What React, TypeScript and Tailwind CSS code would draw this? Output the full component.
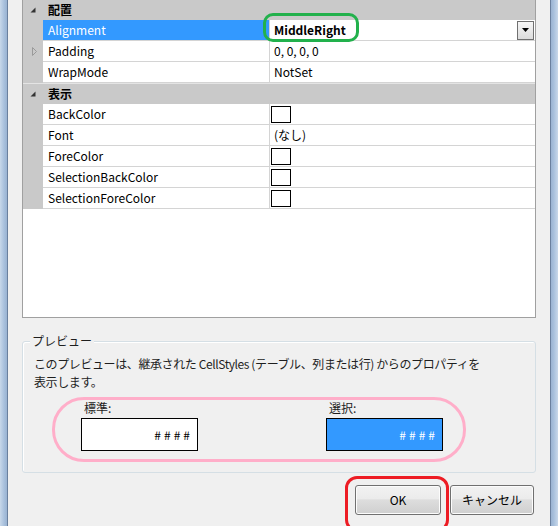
import React from 'react';

type Row =
  | { kind: 'cat'; label: string; first?: boolean }
  | { kind: 'prop'; label: string; value?: string; swatch?: boolean; selected?: boolean; bold?: boolean; expandable?: boolean; dropdown?: boolean };

const rows: Row[] = [
  { kind: 'cat', label: '配置', first: true },
  { kind: 'prop', label: 'Alignment', value: 'MiddleRight', selected: true, bold: true, dropdown: true },
  { kind: 'prop', label: 'Padding', value: '0, 0, 0, 0', expandable: true },
  { kind: 'prop', label: 'WrapMode', value: 'NotSet' },
  { kind: 'cat', label: '表示' },
  { kind: 'prop', label: 'BackColor', swatch: true },
  { kind: 'prop', label: 'Font', value: '(なし)' },
  { kind: 'prop', label: 'ForeColor', swatch: true },
  { kind: 'prop', label: 'SelectionBackColor', swatch: true },
  { kind: 'prop', label: 'SelectionForeColor', swatch: true },
];

function CollapseGlyph() {
  return (
    <svg width="6" height="6" viewBox="0 0 6 6" className="ml-[7px]">
      <polygon points="5.5,0.5 5.5,5.5 0.5,5.5" fill="#333" />
    </svg>
  );
}

function ExpandGlyph() {
  return (
    <svg width="6" height="9" viewBox="0 0 6 9" className="ml-[9px]">
      <polygon points="0.5,0.5 4.5,4.5 0.5,8.5" fill="none" stroke="#9a9a9a" strokeWidth="1" />
    </svg>
  );
}

function GridRow({ row }: { row: Row }) {
  if (row.kind === 'cat') {
    return (
      <div className={`flex items-center bg-[#c9c9c9] ${row.first ? 'h-[20px]' : 'h-[21px] border-t border-[#e4e4e4]'}`}>
        <div className="w-[20px] flex items-center">
          <CollapseGlyph />
        </div>
        <span className="pl-[5px] font-bold text-black">{row.label}</span>
      </div>
    );
  }
  return (
    <div className="flex h-[21px]">
      <div className="w-[20px] bg-[#c9c9c9] flex items-center">{row.expandable && <ExpandGlyph />}</div>
      <div
        className={`w-[227px] border-b border-r border-[#d4d4d4] flex items-center pl-[5px] ${
          row.selected ? 'bg-[#3399ff] text-white' : 'bg-white text-black'
        }`}
      >
        {row.label}
      </div>
      <div className="flex-1 border-b border-[#d4d4d4] bg-white flex items-center">
        {row.swatch && <div className="ml-[1px] w-[20px] h-[17px] border border-black bg-white" />}
        {row.value && <span className={`pl-[4px] text-black ${row.bold ? 'font-bold' : ''}`}>{row.value}</span>}
        {row.dropdown && (
          <div className="ml-auto mr-[1px] w-[17px] h-[19px] border border-[#707070] bg-[linear-gradient(#f6f6f6,#dcdcdc)] flex items-center justify-center">
            <svg width="7" height="4" viewBox="0 0 7 4">
              <polygon points="0,0 7,0 3.5,4" fill="#000" />
            </svg>
          </div>
        )}
      </div>
    </div>
  );
}

function WinButton({ label, w }: { label: string; w: string }) {
  return (
    <div
      className={`${w} h-[30px] rounded-[3px] border border-[#707070] bg-[linear-gradient(#f2f2f2_0%,#ebebeb_45%,#dddddd_50%,#cfcfcf_100%)] flex items-center justify-center text-black shadow-[inset_0_0_0_1px_#fcfcfc]`}
    >
      {label}
    </div>
  );
}

export default function App() {
  return (
    <div
      className="w-[558px] h-[526px] flex overflow-hidden text-[12px] leading-none"
      style={{ fontFamily: '"Noto Sans CJK JP", "Noto Sans", sans-serif' }}
    >
      <div className="w-[8px] bg-[linear-gradient(to_right,#c8d8ea,#a8c0dc_60%,#9ab3d2)] border-r border-[#6a809e]" />

      <div className="flex-1 bg-[#f0f0f0] relative flex flex-col px-[14px]">
        {/* property grid */}
        <div className="h-[318px] border-x border-b border-[#a0a0a0] bg-white flex flex-col">
          {rows.map((r, i) => (
            <GridRow key={i} row={r} />
          ))}
        </div>

        {/* preview group */}
        <div className="relative mt-[23px] h-[132px] border border-[#d5dfe5] rounded-[3px] shadow-[inset_1px_1px_0_#ffffff]">
          <span className="absolute left-[7px] top-[-7px] px-[2px] bg-[#f0f0f0] text-[#1e1e1e]">プレビュー</span>
          <div className="pt-[13px] pl-[11px] leading-[18px] text-[#1e1e1e] tracking-[-0.4px]">
            <div>このプレビューは、継承された CellStyles (テーブル、列または行) からのプロパティを</div>
            <div>表示します。</div>
          </div>
          <div className="flex mt-[9px] ml-[58px]">
            <div className="flex flex-col">
              <span className="pl-[3px] leading-[16px] text-[#1e1e1e]">標準:</span>
              <div className="mt-[2px] w-[117px] h-[33px] border border-black bg-white flex items-center justify-end pr-[4px] tracking-[3px] text-black">
                ####
              </div>
            </div>
            <div className="flex flex-col ml-[128px]">
              <span className="pl-[3px] leading-[16px] text-[#1e1e1e]">選択:</span>
              <div className="mt-[2px] w-[117px] h-[33px] border border-black bg-[#3399ff] flex items-center justify-end pr-[4px] tracking-[3px] text-white">
                ####
              </div>
            </div>
          </div>
        </div>

        {/* buttons */}
        <div className="flex justify-end gap-[9px] mt-[12px] mr-[2px]">
          <WinButton label="OK" w="w-[86px]" />
          <WinButton label="キャンセル" w="w-[84px]" />
        </div>

        {/* annotation rings */}
        <div className="absolute left-[255px] top-[13px] w-[96px] h-[29px] border-[3px] border-[#22b14c] rounded-[10px]" />
        <div className="absolute left-[44px] top-[397px] w-[414px] h-[65px] border-[3px] border-[#ffaec9] rounded-[32px]" />
        <div className="absolute left-[337px] top-[476px] w-[104px] h-[56px] border-[3px] border-[#ed1c24] rounded-[12px]" />
      </div>

      <div className="w-[8px] bg-[linear-gradient(to_right,#9ab3d2,#a8c0dc_40%,#c8d8ea)] border-l border-[#6a809e]" />
    </div>
  );
}
